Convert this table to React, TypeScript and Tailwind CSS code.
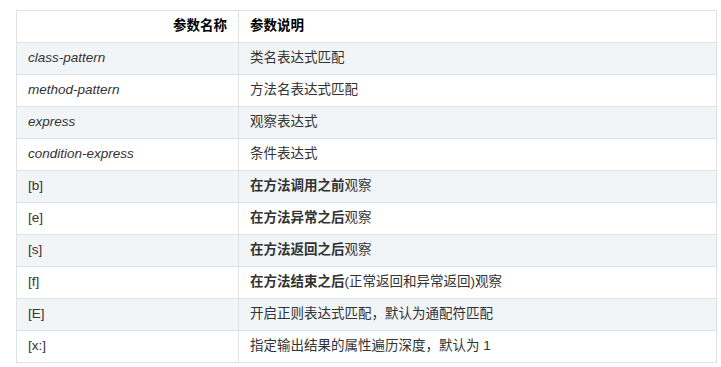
import React from "react";

type Row = { name: React.ReactNode; desc: React.ReactNode };

const rows: Row[] = [
  { name: <em>class-pattern</em>, desc: "类名表达式匹配" },
  { name: <em>method-pattern</em>, desc: "方法名表达式匹配" },
  { name: <em>express</em>, desc: "观察表达式" },
  { name: <em>condition-express</em>, desc: "条件表达式" },
  { name: "[b]", desc: <><strong>在方法调用之前</strong>观察</> },
  { name: "[e]", desc: <><strong>在方法异常之后</strong>观察</> },
  { name: "[s]", desc: <><strong>在方法返回之后</strong>观察</> },
  { name: "[f]", desc: <><strong>在方法结束之后</strong>(正常返回和异常返回)观察</> },
  { name: "[E]", desc: "开启正则表达式匹配，默认为通配符匹配" },
  { name: "[x:]", desc: "指定输出结果的属性遍历深度，默认为 1" },
];

export default function App() {
  return (
    <div
      className="w-[721px] h-[367px] bg-white pt-[10px] pl-[16px]"
      style={{ fontFamily: '"Liberation Sans", Arial, "Noto Sans CJK SC", sans-serif' }}
    >
      <table className="border-collapse w-[701px] text-[13.5px] text-[#333333]">
        <thead>
          <tr className="h-[32px] bg-white">
            <th className="border border-[#dfe2e5] w-[222px] px-[11px] text-right font-bold text-black">参数名称</th>
            <th className="border border-[#dfe2e5] px-[11px] text-left font-bold text-black">参数说明</th>
          </tr>
        </thead>
        <tbody>
          {rows.map((r, i) => (
            <tr key={i} className={i % 2 === 0 ? "h-[32px] bg-[#f2f5f7]" : "h-[32px] bg-white"}>
              <td className="border border-[#dfe2e5] px-[11px]">{r.name}</td>
              <td className="border border-[#dfe2e5] px-[11px]">{r.desc}</td>
            </tr>
          ))}
        </tbody>
      </table>
    </div>
  );
}
